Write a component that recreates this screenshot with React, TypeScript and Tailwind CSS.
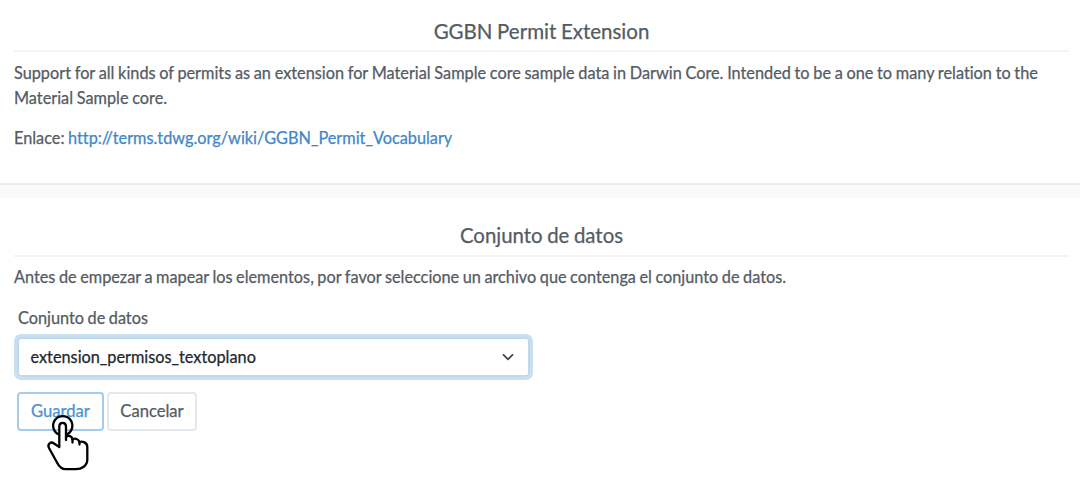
export default function App() {
  return (
    <main className="h-[480px] overflow-hidden bg-white font-['Lato',sans-serif] text-[16.3px] text-[#545b64] [font-variant-ligatures:none] [word-spacing:-0.65px] [-webkit-text-stroke:0.25px_currentColor]">
      <section className="h-[183px] px-[14px] pt-[16px]">
        <h1 className="mr-[-3px] h-[36px] border-b-2 border-[#f3f4f4] text-center text-[20.5px] leading-[31px]">GGBN Permit Extension</h1>
        <p className="mt-[9px] leading-[24.5px] [word-spacing:-0.47px]">Support for all kinds of permits as an extension for Material Sample core sample data in Darwin Core. Intended to be a one to many relation to the<br />Material Sample core.</p>
        <p className="mt-[16px] leading-[24px]">Enlace: <a className="text-[#3f87c9]">http://terms.tdwg.org/wiki/GGBN_Permit_Vocabulary</a></p>
      </section>
      <div className="h-[15px] border-t-2 border-[#eaeded] bg-[#f7f9fa]" />
      <section className="px-[14px] pt-[22px]">
        <h2 className="mr-[-3px] h-[37px] border-b-2 border-[#f3f4f4] text-center text-[20.4px] leading-[30px]">Conjunto de datos</h2>
        <p className="mt-[8px] leading-[24px]">Antes de empezar a mapear los elementos, por favor seleccione un archivo que contenga el conjunto de datos.</p>
        <label className="mt-[17px] ml-[4px] block leading-[24px]">Conjunto de datos</label>
        <button className="mt-[7px] ml-[3px] flex h-[40px] w-[513px] items-center justify-between rounded-[4px] border-2 border-[#bed9ed] pr-[12px] pl-[11.5px] text-[16.3px] text-[#24282d] ring-3 ring-[#c9e0f1]">
          extension_permisos_textoplano
          <svg width="16" height="16" viewBox="0 0 16 16" fill="none" stroke="#42484e" strokeWidth="1.8" strokeLinecap="round" strokeLinejoin="round"><path d="m3.5 5.8 4.5 4.5 4.5-4.5" /></svg>
        </button>
        <div className="relative mt-[15px] ml-[3px] flex gap-[3px]">
          <button className="h-[39px] w-[87px] rounded-[4px] border-2 border-[#a3cbeb] px-0 text-[16.6px] text-[#4a92d2]">Guardar</button>
          <button className="h-[39px] w-[90px] rounded-[4px] border-2 border-[#e4e7ec] px-0 text-[16.6px]">Cancelar</button>
          <svg className="absolute top-[20px] left-[27px]" width="48" height="62" viewBox="0 0 48 62" fill="none" stroke="#000" strokeWidth="2.3" strokeLinecap="round" strokeLinejoin="round">
            <path d="M15 22.5A9.6 9.6 0 1 1 22.5 22.5" />
            <path fill="#fff" d="M15.3 34V14.5C15.3 9.6 22 9.6 22 14.5V25C24.5 23 28 24 28.5 27.5C31 25.8 34.5 27 35.5 30C38.5 28.8 43.3 30.5 43.3 35V47.5C43.3 54 37.5 57.2 32 57.2H22C17.5 57.2 15 54.5 13 50.5L5 36C3 32 7 29 10 31.5L15.3 35Z" />
            <path d="M22 25V28M28.5 27.5V30.5M35.5 30V32.5" />
          </svg>
        </div>
      </section>
    </main>
  );
}
